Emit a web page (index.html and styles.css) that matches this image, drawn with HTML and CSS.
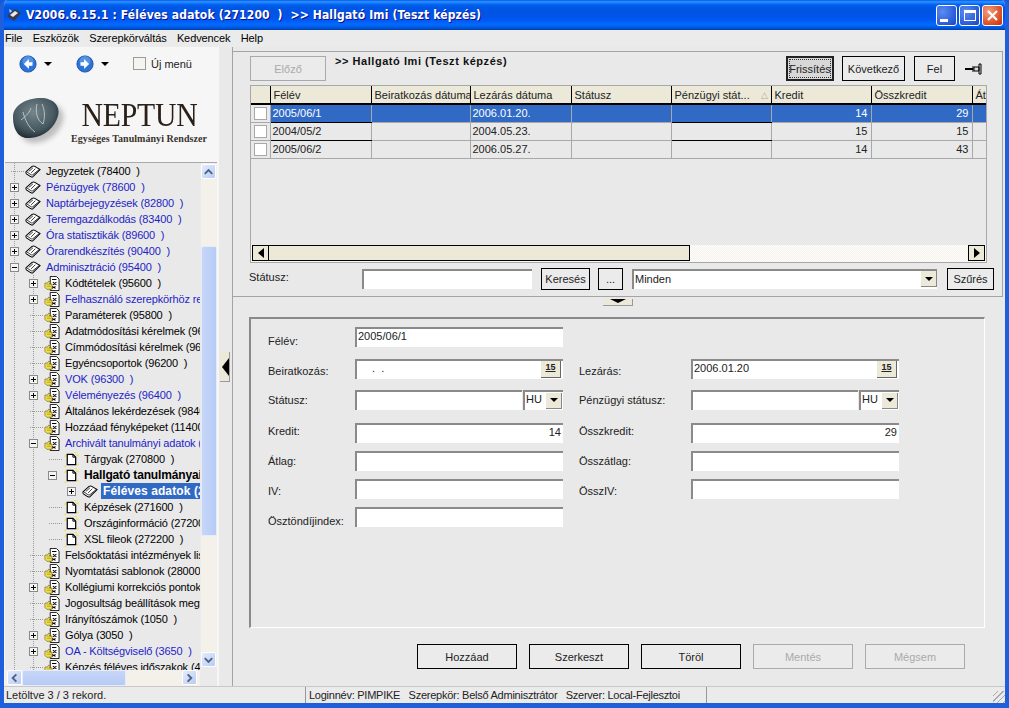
FILE: index.html
```html
<!DOCTYPE html>
<html lang="hu">
<head>
<meta charset="utf-8">
<title>Féléves adatok</title>
<link rel="stylesheet" href="styles.css">
</head>
<body>
<svg class="defs" width="0" height="0">
  <defs>
    <symbol id="book" viewBox="0 0 17 14">
      <path d="M1 7.500 7.500 1.500c1-.6 2-.6 3 0L16 5 8.500 12.500c-1 .5-2 .4-3-.3L1.500 9.500c-.6-.6-.6-1.500-.5-2z" fill="#fff" stroke="#000" stroke-width="1.100"/>
      <path d="M2 7.500 6.500 10.500c.8.400 1.300.300 2-.2L15.500 4.500M8.500 3 4 7M11 4 6.500 8.500" fill="none" stroke="#000" stroke-width=".8"/>
    </symbol>
    <symbol id="doc" viewBox="0 0 16 16">
      <path d="M1 5 3 3M12 1l2-1M14 13l2 1M3 15l-2 1M13 3l3 1" stroke="#f4e04a" stroke-width="1.500"/>
      <path d="M4 2.500h6l3 3v8H4z" fill="#fff" stroke="#000" stroke-width="1.300"/>
      <path d="M10 2.500v3h3" fill="none" stroke="#000"/>
    </symbol>
    <symbol id="fold" viewBox="0 0 18 17">
      <path d="M7 .5h7l3 3v13H7z" fill="#fff" stroke="#000"/>
      <path d="M9 4h5M10 7l4 3M14 7l-4 3M9 12l4 2M13 12l-4 2" stroke="#000" stroke-width="1.200"/>
      <path d="M1 8h3l1-2 2 1-1 2h3v6H3l-2-2z" fill="#f3e25a" stroke="#7a6d10" stroke-width=".8"/>
      <path d="M3 10h5M3 12h5" stroke="#9a8a20" stroke-width=".7"/>
    </symbol>
    <symbol id="arrow" viewBox="0 0 20 20">
      <circle cx="10" cy="10" r="9" fill="#2c74d8" stroke="#1a4fa8"/>
      <circle cx="10" cy="7" r="6" fill="#6da6ee" opacity=".6"/>
      <path d="M11 4.500 5.500 10l5.500 5.500V12h4V8h-4z" fill="#fff"/>
    </symbol>
    <symbol id="up" viewBox="0 0 14 14"><path d="M3 9 7 5l4 4" fill="none" stroke="#4d6185" stroke-width="2"/></symbol>
    <symbol id="down" viewBox="0 0 14 14"><path d="M3 5l4 4 4-4" fill="none" stroke="#4d6185" stroke-width="2"/></symbol>
    <symbol id="left" viewBox="0 0 14 14"><path d="M9 3 5 7l4 4" fill="none" stroke="#4d6185" stroke-width="2"/></symbol>
    <symbol id="right" viewBox="0 0 14 14"><path d="M5 3l4 4-4 4" fill="none" stroke="#4d6185" stroke-width="2"/></symbol>
    <radialGradient id="stoneG" cx=".45" cy=".35" r=".75">
      <stop offset="0" stop-color="#75858b"/><stop offset=".6" stop-color="#465860"/><stop offset="1" stop-color="#141a1e"/>
    </radialGradient>
  </defs>
</svg>

<div class="window">
  <header class="titlebar">
    <svg class="appicon" width="16" height="16" viewBox="0 0 16 16"><path d="M1 9 9 2l6 4-7 8z" fill="#3a3a44"/><path d="M4 8l5-4 3 2-5 4z" fill="#e8e8ee"/><path d="M3 2l3 2-2 2z" fill="#d8d8e0"/></svg>
    <span class="title">V2006.6.15.1 : Féléves adatok (271200  )  &gt;&gt; Hallgató Imi (Teszt képzés)</span>
    <div class="winbtns">
      <span class="wb"><i class="g-min"></i></span>
      <span class="wb"><i class="g-max"></i></span>
      <span class="wb wb-close"><svg width="13" height="13" viewBox="0 0 13 13"><path d="M2 2l9 9M11 2l-9 9" stroke="#fff" stroke-width="2.200"/></svg></span>
    </div>
  </header>

  <nav class="menubar">
    <span>File</span><span>Eszközök</span><span>Szerepkörváltás</span><span>Kedvencek</span><span>Help</span>
  </nav>

  <div class="content">
    <aside class="sidebar">
      <div class="navbar">
        <svg class="nav-arrow" width="18" height="18"><use href="#arrow"/></svg><i class="caret"></i>
        <svg class="nav-arrow nav-fwd" width="18" height="18"><use href="#arrow"/></svg><i class="caret"></i>
        <span class="chk chk-new"></span><span class="newmenu">Új menü</span>
      </div>
      <div class="logo">
        <svg class="stone" width="62" height="56" viewBox="0 0 62 56">
          <defs><filter id="sh"><feGaussianBlur stdDeviation="2.500"/></filter></defs>
          <path d="M6 24C6 12 20 6 34 6c12 0 20 8 17 18-3 11-13 21-28 22C11 47 6 36 6 24z" fill="#888" opacity=".5" filter="url(#sh)" transform="translate(3 3)"/>
          <path d="M4 23C4 11 18 4 32 4c12 0 20 8 17 18-3 11-13 21-28 22C9 45 4 35 4 23z" fill="url(#stoneG)"/>
          <path d="M14 18c2 8 6 16 12 20M12 26c5-4 9-8 10-12M28 10c-2 8 0 16 6 20 2-6 2-14-1-20" fill="none" stroke="#b9c2c6" stroke-width="1"/>
        </svg>
        <div class="logotext">
          <span class="neptun">NEPTUN</span>
          <span class="subtitle">Egységes Tanulmányi Rendszer</span>
        </div>
      </div>
      <div class="treebox">
        <div class="treepane">
          <ul class="tree">
            <li class="row l0"><i class="noexp"></i><svg class="ico"><use href="#book"/></svg><span>Jegyzetek (78400  )</span></li>
            <li class="row l0 bl"><i class="exp"></i><svg class="ico"><use href="#book"/></svg><span>Pénzügyek (78600  )</span></li>
            <li class="row l0 bl"><i class="exp"></i><svg class="ico"><use href="#book"/></svg><span>Naptárbejegyzések (82800  )</span></li>
            <li class="row l0 bl"><i class="exp"></i><svg class="ico"><use href="#book"/></svg><span>Teremgazdálkodás (83400  )</span></li>
            <li class="row l0 bl"><i class="exp"></i><svg class="ico"><use href="#book"/></svg><span>Óra statisztikák (89600  )</span></li>
            <li class="row l0 bl"><i class="exp"></i><svg class="ico"><use href="#book"/></svg><span>Órarendkészítés (90400  )</span></li>
            <li class="row l0 bl"><i class="exp open"></i><svg class="ico"><use href="#book"/></svg><span>Adminisztráció (95400  )</span></li>
            <li class="row l1"><i class="exp"></i><svg class="ico"><use href="#fold"/></svg><span>Kódtételek (95600  )</span></li>
            <li class="row l1 bl"><i class="exp"></i><svg class="ico"><use href="#fold"/></svg><span>Felhasználó szerepkörhöz rendelése</span></li>
            <li class="row l1"><i class="noexp"></i><svg class="ico"><use href="#fold"/></svg><span>Paraméterek (95800  )</span></li>
            <li class="row l1"><i class="noexp"></i><svg class="ico"><use href="#fold"/></svg><span>Adatmódosítási kérelmek (96000  )</span></li>
            <li class="row l1"><i class="noexp"></i><svg class="ico"><use href="#fold"/></svg><span>Címmódosítási kérelmek (96100  )</span></li>
            <li class="row l1"><i class="noexp"></i><svg class="ico"><use href="#fold"/></svg><span>Egyéncsoportok (96200  )</span></li>
            <li class="row l1 bl"><i class="exp"></i><svg class="ico"><use href="#fold"/></svg><span>VOK (96300  )</span></li>
            <li class="row l1 bl"><i class="exp"></i><svg class="ico"><use href="#fold"/></svg><span>Véleményezés (96400  )</span></li>
            <li class="row l1"><i class="noexp"></i><svg class="ico"><use href="#fold"/></svg><span>Általános lekérdezések (98400  )</span></li>
            <li class="row l1"><i class="noexp"></i><svg class="ico"><use href="#fold"/></svg><span>Hozzáad fényképeket (114000  )</span></li>
            <li class="row l1 bl"><i class="exp open"></i><svg class="ico"><use href="#fold"/></svg><span>Archivált tanulmányi adatok (270000  )</span></li>
            <li class="row l2"><i class="noexp"></i><svg class="ico"><use href="#doc"/></svg><span>Tárgyak (270800  )</span></li>
            <li class="row l2 bd"><i class="exp open"></i><svg class="ico"><use href="#doc"/></svg><span>Hallgató tanulmányai (271000  )</span></li>
            <li class="row l3 sel"><i class="exp"></i><svg class="ico"><use href="#book"/></svg><span>Féléves adatok (271200  )</span></li>
            <li class="row l2"><i class="noexp"></i><svg class="ico"><use href="#doc"/></svg><span>Képzések (271600  )</span></li>
            <li class="row l2"><i class="noexp"></i><svg class="ico"><use href="#doc"/></svg><span>Országinformáció (272000  )</span></li>
            <li class="row l2"><i class="noexp"></i><svg class="ico"><use href="#doc"/></svg><span>XSL fileok (272200  )</span></li>
            <li class="row l1"><i class="noexp"></i><svg class="ico"><use href="#fold"/></svg><span>Felsőoktatási intézmények listája</span></li>
            <li class="row l1"><i class="noexp"></i><svg class="ico"><use href="#fold"/></svg><span>Nyomtatási sablonok (280000  )</span></li>
            <li class="row l1"><i class="exp"></i><svg class="ico"><use href="#fold"/></svg><span>Kollégiumi korrekciós pontok (1000)</span></li>
            <li class="row l1"><i class="noexp"></i><svg class="ico"><use href="#fold"/></svg><span>Jogosultság beállítások megtekintése</span></li>
            <li class="row l1"><i class="noexp"></i><svg class="ico"><use href="#fold"/></svg><span>Irányítószámok (1050  )</span></li>
            <li class="row l1"><i class="exp"></i><svg class="ico"><use href="#fold"/></svg><span>Gólya (3050  )</span></li>
            <li class="row l1 bl"><i class="exp"></i><svg class="ico"><use href="#fold"/></svg><span>OA - Költségviselő (3650  )</span></li>
            <li class="row l1"><i class="noexp"></i><svg class="ico"><use href="#fold"/></svg><span>Képzés féléves időszakok (4000  )</span></li>
          </ul>
          <div class="vscroll">
            <span class="sb-btn"><svg width="14" height="14"><use href="#up"/></svg></span>
            <span class="sb-gap1"></span>
            <span class="sb-thumb-v"></span>
            <span class="sb-gap2"></span>
            <span class="sb-btn"><svg width="14" height="14"><use href="#down"/></svg></span>
          </div>
        </div>
        <div class="hscroll">
          <span class="sb-btn"><svg width="14" height="14"><use href="#left"/></svg></span>
          <span class="sb-thumb-h"></span>
          <span class="sb-btn"><svg width="14" height="14"><use href="#right"/></svg></span>
        </div>
      </div>
    </aside>

    <div class="splitter"><span class="split-handle"><i></i></span></div>

    <main class="main">
      <section class="toppanel">
        <div class="toolbar">
          <button class="btn off b-prev">Előző</button>
          <span class="heading">&gt;&gt; Hallgató Imi (Teszt képzés)</span>
          <span class="spacer"></span>
          <button class="btn focus">Frissítés</button>
          <button class="btn b-next">Következő</button>
          <button class="btn b-up">Fel</button>
          <svg class="pin" width="18" height="12" viewBox="0 0 18 12"><path d="M0 6h8" stroke="#000" stroke-width="2"/><path d="M8 3v6M9 4h5v4H9zM14 1v10h2V1z" fill="#ddd" stroke="#000"/></svg>
        </div>
        <div class="gridbox">
          <table class="grid">
            <colgroup><col class="c0"><col class="c1"><col class="c2"><col class="c3"><col class="c4"><col class="c5"><col class="c6"><col class="c7"><col class="c8"></colgroup>
            <thead>
              <tr><th></th><th>Félév</th><th>Beiratkozás dátuma</th><th>Lezárás dátuma</th><th>Státusz</th><th><span class="th-flex">Pénzügyi stát...<i class="sort">△</i></span></th><th>Kredit</th><th>Összkredit</th><th>Átlag</th></tr>
            </thead>
            <tbody>
              <tr class="selrow"><td class="cbx"><span class="chk"></span></td><td class="k">2005/06/1</td><td></td><td>2006.01.20.</td><td></td><td class="k"></td><td class="n">14</td><td class="n">29</td><td></td></tr>
              <tr><td class="cbx"><span class="chk"></span></td><td class="k">2004/05/2</td><td></td><td>2004.05.23.</td><td></td><td class="k"></td><td class="n">15</td><td class="n">15</td><td></td></tr>
              <tr><td class="cbx"><span class="chk"></span></td><td class="k">2005/06/2</td><td></td><td>2006.05.27.</td><td></td><td class="k"></td><td class="n">14</td><td class="n">43</td><td></td></tr>
            </tbody>
          </table>
          <div class="gridscroll">
            <span class="gs-btn"><i class="tri-l"></i></span>
            <span class="gs-thumb"></span>
            <span class="gs-track"></span>
            <span class="gs-btn"><i class="tri-r"></i></span>
          </div>
        </div>
        <div class="filter">
          <label class="f-label">Státusz:</label>
          <span class="field f-status"></span>
          <button class="btn b-search">Keresés</button>
          <button class="btn b-dots">...</button>
          <span class="field f-select"><span class="grow">Minden</span><span class="dd"><i class="tri-d"></i></span></span>
          <button class="btn b-filter">Szűrés</button>
        </div>
      </section>

      <div class="collapse"><span class="collapse-h"><i class="tri-d wide"></i></span></div>

      <section class="formbox">
        <div class="form">
          <label class="lab lo4">Félév:</label><span class="field">2005/06/1</span><span></span><span></span>

          <label class="lab lo2">Beiratkozás:</label><span class="field"><span class="grow dots">. &nbsp;.</span><span class="cal">15</span></span>
          <label class="lab lo2">Lezárás:</label><span class="field"><span class="grow">2006.01.20</span><span class="cal">15</span></span>

          <label class="lab">Státusz:</label><span class="combo"><span class="field grow"></span><span class="field hu">HU<span class="dd"><i class="tri-d"></i></span></span></span>
          <label class="lab">Pénzügyi státusz:</label><span class="combo"><span class="field grow"></span><span class="field hu">HU<span class="dd"><i class="tri-d"></i></span></span></span>

          <label class="lab lup">Kredit:</label><span class="field num">14</span>
          <label class="lab lup">Összkredit:</label><span class="field num">29</span>

          <label class="lab">Átlag:</label><span class="field"></span>
          <label class="lab">Összátlag:</label><span class="field"></span>

          <label class="lab lo2">IV:</label><span class="field"></span>
          <label class="lab lo2">ÖsszIV:</label><span class="field"></span>

          <label class="lab lo4">Ösztöndíjindex:</label><span class="field"></span><span></span><span></span>
        </div>
      </section>

      <div class="actions">
        <button class="btn act">Hozzáad</button>
        <button class="btn act">Szerkeszt</button>
        <button class="btn act">Töröl</button>
        <button class="btn act off">Mentés</button>
        <button class="btn act off">Mégsem</button>
      </div>
    </main>
  </div>

  <footer class="statusbar">
    <span class="sp sp1">Letöltve 3 / 3 rekord.</span>
    <span class="sp sp2">Loginnév: PIMPIKE   Szerepkör: Belső Adminisztrátor   Szerver: Local-Fejlesztoi</span>
    <span class="sp sp3"></span>
  </footer>
</div>
</body>
</html>
```
FILE: styles.css
```css
* { box-sizing: border-box; }
html, body { margin: 0; padding: 0; }
body { width: 1009px; height: 708px; overflow: hidden; font: 11px/14px "Liberation Sans", Arial, sans-serif; color: #000; background: #0a5be0; }
.defs { display: block; width: 0; height: 0; }
button { font: inherit; color: inherit; padding: 0; }
ul { list-style: none; margin: 0; padding: 0; }

.window { width: 1009px; height: 708px; display: flex; flex-direction: column; background: #e9e9e9; border: solid #1f5fdc; border-width: 0 4px 5px; border-radius: 7px 7px 0 0; overflow: hidden; }

.titlebar { height: 30px; flex: none; margin: 0 -4px; padding: 0 6px 0 6px; display: flex; align-items: center; color: #fff; background: linear-gradient(#0058ee, #3593ff 6%, #127dff 10%, #0262ee 16%, #0057e5 24%, #0054e3 40%, #0055eb 60%, #005bf5 70%, #026afe 80%, #0062ef 88%, #0052d6 94%, #0040ab); }
.appicon { margin-right: 4px; flex: none; }
.title { font: bold 12px/16px "DejaVu Sans Condensed", "Liberation Sans", sans-serif; letter-spacing: .15px; white-space: pre; text-shadow: 1px 1px #0f1089; }
.winbtns { margin-left: auto; display: flex; gap: 2px; }
.wb { width: 21px; height: 21px; border: 1px solid #fff; border-radius: 3px; background: radial-gradient(circle at 30% 30%, #5a8cf0, #2a5ad8 70%, #1f44b8); display: flex; align-items: center; justify-content: center; position: relative; }
.wb-close { background: radial-gradient(circle at 30% 30%, #f0a080, #e0552c 60%, #c03010); }
.g-min { width: 8px; height: 3px; background: #fff; margin: 10px 6px 0 0; }
.g-max { width: 12px; height: 11px; border: 1px solid #fff; border-top-width: 3px; }

.menubar { height: 17px; flex: none; display: flex; gap: 10.300px; padding: 1px 0 0 1px; line-height: 15px; background: #ebebeb; letter-spacing: -.1px; }

.content { flex: 1; display: flex; min-height: 0; }

.sidebar { width: 215px; flex: none; padding-left: 1px; display: flex; flex-direction: column; background: #f6f6f6; }
.navbar { height: 27px; flex: none; display: flex; align-items: center; padding: 6px 0 0 14px; }
.nav-fwd { margin-left: 24px; transform: scaleX(-1); }
.caret { width: 0; height: 0; border: 4px solid transparent; border-top: 4px solid #000; border-bottom: 0; margin-left: 7px; }
.chk { display: block; width: 13px; height: 13px; background: #fff; border: 1px solid #9c9c9c; }
.chk-new { margin-left: 24px; background: #f4f4f0; }
.newmenu { margin-left: 5px; color: #222; }

.logo { height: 88px; flex: none; display: flex; padding: 19px 0 0 4px; }
.stone { flex: none; margin-top: 1px; }
.logotext { display: flex; flex-direction: column; align-items: center; padding-top: 7px; width: 136px; }
.neptun { font: 33px/30px "Liberation Serif", serif; color: #2a2018; letter-spacing: -.2px; transform: scaleX(.9); }
.subtitle { font: bold 10px/12px "Liberation Serif", serif; color: #3a332c; white-space: nowrap; margin-top: 3px; letter-spacing: .05px; }

.treebox { flex: 1; min-height: 0; margin-right: 2px; display: flex; flex-direction: column; border-top: 1px solid #aaa; background: #eaeaea; }
.treepane { flex: 1; min-height: 0; display: flex; }
.tree { width: 195px; flex: none; overflow: hidden; background-color: #e9e9e9; }
.row { height: 16px; display: flex; align-items: center; padding-left: 5px; white-space: pre; background-image: linear-gradient(#999 50%, transparent 50%); background-size: 1px 2px; background-repeat: repeat-y; background-position: 9px 0; }
.row span { margin-left: 4px; padding: 0 1px; line-height: 16px; letter-spacing: -.15px; }
.bl { color: #1e1ec8; }
.bd span { font-weight: bold; font-size: 12px; }
.l1 { padding-left: 24px; }
.l2 { padding-left: 43px; }
.l3 { padding-left: 62px; }
.l1, .l2, .l3 { background-image: linear-gradient(#999 50%, transparent 50%), linear-gradient(#999 50%, transparent 50%); background-size: 1px 2px, 1px 2px; background-repeat: repeat-y, repeat-y; background-position: 9px 0, 28px 0; }
.sel span { margin-left: 3px; background: #316ac5; color: #fff; font-weight: bold; font-size: 12px; padding: 0 2px 0 2px; letter-spacing: .1px; }
.ico { width: 16px; height: 15px; flex: none; }
.exp { flex: none; width: 9px; height: 9px; margin-right: 6px; border: 1px solid #8a8a8a; background: linear-gradient(#000, #000) center / 5px 1px no-repeat, linear-gradient(#000, #000) center / 1px 5px no-repeat, #f4f4f4; }
.exp.open { background: linear-gradient(#000, #000) center / 5px 1px no-repeat, #f4f4f4; }
.noexp { flex: none; width: 15px; height: 1px; background: repeating-linear-gradient(90deg, transparent 0 1px, #999 1px 2px); }

.vscroll { width: 16px; flex: none; margin-left: 1px; display: flex; flex-direction: column; height: 504px; padding-top: 1px; background: #f3f1ea; }
.sb-btn { width: 15px; height: 15px; flex: none; display: flex; align-items: center; justify-content: center; border: 1px solid #fff; border-radius: 2px; background: linear-gradient(135deg, #e4ecfc, #b8ccf2); }
.sb-gap1 { height: 67px; flex: none; }
.sb-gap2 { flex: 1; }
.sb-thumb-v { height: 290px; flex: none; border: 1px solid #e4ecfc; border-radius: 2px; background: linear-gradient(90deg, #c6d6f8, #b6cbf5); }
.hscroll { height: 16px; flex: none; display: flex; padding-left: 2px; width: 195px; background: #f3f1ea; }
.sb-thumb-h { width: 104px; flex: none; margin-right: 56px; border: 1px solid #e4ecfc; border-radius: 2px; background: linear-gradient(#c6d6f8, #b6cbf5); }

.splitter { width: 13px; flex: none; padding: 305px 0 0 1px; background: #e9e9e9; }
.split-handle { display: flex; width: 10px; height: 30px; align-items: center; background: #ece9d8; border-right: 1px solid #999; border-bottom: 1px solid #999; }
.split-handle i { width: 0; height: 0; margin-left: 2px; border: solid transparent; border-width: 9px 7px 9px 0; border-right-color: #000; }

.main { width: 771px; flex: none; padding-top: 4px; display: flex; flex-direction: column; border-left: 1px solid #a4a4a4; }
.toppanel { height: 246px; flex: none; border: 1px solid #a4a4a4; border-left: 0; padding: 0 8px 0 17px; }
.toolbar { display: flex; align-items: flex-start; height: 33px; padding-top: 4px; }
.btn { height: 25px; border: 1px solid #000; background: #ebebeb; text-align: center; box-shadow: none; white-space: nowrap; color: #222; }
.btn.off { border-color: #aaa; color: #aaa; }
.b-prev { width: 76px; }
.heading { margin: -2px 0 0 9px; font-weight: bold; font-size: 11px; letter-spacing: .55px; color: #111; }
.spacer { flex: 1; }
.focus { width: 48px; margin-right: 8px; border: 2px solid #222; background: #d8d8d8; outline: 1px dotted #333; outline-offset: -4px; }
.b-next { width: 63px; margin-right: 9px; }
.b-up { width: 41px; margin-right: 10px; }
.pin { margin: 7px 11px 0 0; flex: none; }

.gridbox { width: 737px; height: 178px; border: 1px solid #a8a8a8; display: flex; flex-direction: column; justify-content: space-between; overflow: hidden; background: #e9e9e9; }
.grid { width: 735px; table-layout: fixed; border-collapse: collapse; white-space: nowrap; }
.c0 { width: 19px; } .c1 { width: 101px; } .c2 { width: 99px; } .c3 { width: 101px; } .c4 { width: 100px; } .c5 { width: 100px; } .c6 { width: 100px; } .c7 { width: 101px; } .c8 { width: 14px; }
.grid th { height: 18px; padding: 0 0 0 3px; font-weight: normal; text-align: left; background: #ece9d8; border-right: 1px solid #000; border-bottom: 2px solid #000; overflow: hidden; color: #222; }
.grid th:last-child { border-right: 0; }
.th-flex { display: flex; justify-content: space-between; padding-right: 3px; }
.sort { font-style: normal; font-size: 9px; color: #aaa; }
.grid td { height: 18px; padding: 0 2px; border: 1px solid #a8a8a8; overflow: hidden; color: #222; }
.grid td.k { border-color: #000 #a8a8a8 #000 #000; }
.grid td.n { text-align: right; padding-right: 3px; }
.grid td.cbx { padding: 0 0 0 3px; border-left: 0; }
.grid tbody tr:last-child td { border-bottom-color: #a8a8a8; }
.cbx .chk { width: 13px; height: 13px; border-color: #a8a8a8; }
.selrow td { background: #316ac5; color: #fff; }
.grid .selrow td { color: #fff; }
.selrow td.cbx { background: #e9e9e9; }

.gridscroll { height: 17px; flex: none; display: flex; padding: 0 1px 1px; background: repeating-conic-gradient(#f4f2e8 0 25%, #fff 0 50%) 0 0 / 2px 2px; }
.gs-btn { width: 17px; flex: none; display: flex; align-items: center; justify-content: center; background: #ece9d8; border: 1px solid #000; }
.gs-thumb { width: 421px; flex: none; background: #ece9d8; border: 1px solid #000; border-left: 0; }
.gs-track { flex: 1; }
.tri-l { border: solid transparent; border-width: 5px 6px 5px 0; border-right-color: #000; }
.tri-r { border: solid transparent; border-width: 5px 0 5px 6px; border-left-color: #000; }
.tri-d { display: block; border: solid transparent; border-width: 4px 4px 0; border-top-color: #000; }
.tri-d.wide { border-width: 4px 8px 0; }

.filter { display: flex; align-items: flex-start; padding: 5px 0 0 0; margin-left: -1px; }
.f-label { width: 113px; flex: none; padding-top: 2px; color: #222; }
.field { height: 20px; display: flex; align-items: center; padding: 0 2px 4px 1px; background: #fff; border: solid #8a8a8a; border-width: 2px 0 0 2px; white-space: pre; color: #222; }
.f-status { width: 170px; margin-top: 1px; }
.b-search { width: 49px; height: 22px; margin-left: 9px; }
.b-dots { width: 25px; height: 22px; margin-left: 8px; }
.f-select { width: 305px; margin: 1px 0 0 9px; padding: 0 0 2px 1px; }
.grow { flex: 1; min-width: 0; }
.dd { width: 16px; height: 16px; flex: none; display: flex; align-items: center; justify-content: center; background: #ece9d8; border: solid #888; border-width: 0 1px 1px 0; }
.hu .dd { margin-top: 3px; }
.b-filter { width: 47px; height: 22px; margin-left: 10px; }

.collapse { height: 20px; flex: none; padding: 2px 0 0 370px; }
.collapse-h { display: flex; justify-content: center; width: 30px; height: 7px; background: #ece9d8; border: solid #999; border-width: 0 1px 1px 0; }

.formbox { width: 736px; height: 311px; flex: none; margin-left: 16px; border: solid; border-width: 2px 1px 1px 2px; border-color: #8a8a8a #fff #fff #8a8a8a; }
.form { display: grid; grid-template-columns: 87px 208px 128px 208px; grid-template-rows: 32px 31px 33px 28px 28px 28px 20px; padding: 8px 0 0 17px; }
.form > .field, .combo { height: 20px; }
.lab { line-height: 20px; color: #222; }
.lo2 { padding-top: 2px; }
.lo4 { padding-top: 4px; }
.lup { margin-top: -2px; }
.form > .lab:nth-child(4n+3) { margin-left: 16px; }
.num { justify-content: flex-end; }
.dots { padding-left: 14px; }
.cal { width: 20px; height: 17px; flex: none; margin-top: 3px; text-align: center; font-size: 9px; line-height: 13px; font-weight: bold; text-decoration: underline; background: #ece9d8; border: solid #666; border-width: 0 1px 1px 0; }
.combo { display: flex; gap: 1px; }
.hu { width: 40px; flex: none; padding-right: 1px; justify-content: space-between; }

.actions { display: flex; gap: 12px; padding: 16px 0 0 184px; }
.act { width: 100px; }

.statusbar { height: 17px; flex: none; display: flex; padding-left: 2px; white-space: pre; color: #222; background: #ebebeb; border-top: 1px solid #c8c8c8; }
.sp { display: block; line-height: 15px; padding-top: 1px; }
.sp1 { width: 299px; }
.sp2 { width: 401px; border-left: 1px solid #999; padding-left: 3px; letter-spacing: -.25px; }
.sp3 { flex: 1; border-left: 1px solid #999; background: repeating-linear-gradient(135deg, transparent 0 3px, #aaa 3px 4px) right bottom / 12px 12px no-repeat; }
```
